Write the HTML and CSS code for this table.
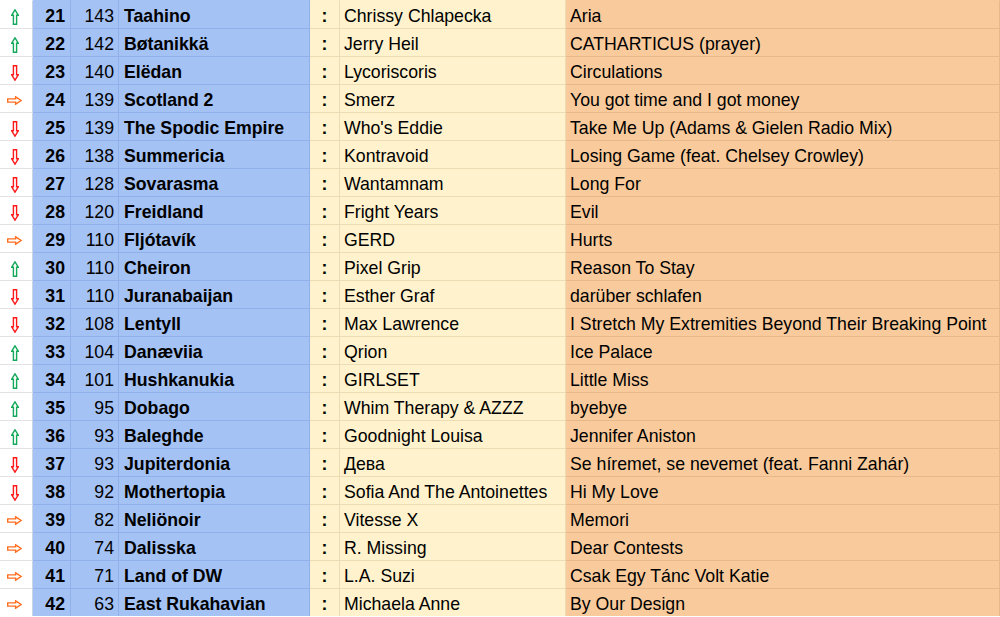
FILE: index.html
```html
<!DOCTYPE html>
<html>
<head>
<meta charset="utf-8">
<link rel="stylesheet" href="styles.css">
</head>
<body>
<div class="sheet">
  <div class="row"><div class="c arr"><svg class="up" width="8" height="16" viewBox="0 0 8 16"><polygon points="4,0.8 7.3,6.2 5.6,6.2 5.6,15.3 2.4,15.3 2.4,6.2 0.7,6.2"/></svg></div><div class="c rk">21</div><div class="c pt">143</div><div class="c nm">Taahino</div><div class="c co">:</div><div class="c ar">Chrissy Chlapecka</div><div class="c sg">Aria</div></div>
  <div class="row"><div class="c arr"><svg class="up" width="8" height="16" viewBox="0 0 8 16"><polygon points="4,0.8 7.3,6.2 5.6,6.2 5.6,15.3 2.4,15.3 2.4,6.2 0.7,6.2"/></svg></div><div class="c rk">22</div><div class="c pt">142</div><div class="c nm">Bøtanikkä</div><div class="c co">:</div><div class="c ar">Jerry Heil</div><div class="c sg">CATHARTICUS (prayer)</div></div>
  <div class="row"><div class="c arr"><svg class="dn" width="8" height="16" viewBox="0 0 8 16"><polygon points="4,15.2 7.3,9.8 5.6,9.8 5.6,0.7 2.4,0.7 2.4,9.8 0.7,9.8"/></svg></div><div class="c rk">23</div><div class="c pt">140</div><div class="c nm">Elëdan</div><div class="c co">:</div><div class="c ar">Lycoriscoris</div><div class="c sg">Circulations</div></div>
  <div class="row"><div class="c arr"><svg class="rt" width="15" height="9" viewBox="0 0 15 9"><polygon points="0.7,2.9 8.6,2.9 8.6,0.8 14.2,4.5 8.6,8.2 8.6,6.1 0.7,6.1"/></svg></div><div class="c rk">24</div><div class="c pt">139</div><div class="c nm">Scotland 2</div><div class="c co">:</div><div class="c ar">Smerz</div><div class="c sg">You got time and I got money</div></div>
  <div class="row"><div class="c arr"><svg class="dn" width="8" height="16" viewBox="0 0 8 16"><polygon points="4,15.2 7.3,9.8 5.6,9.8 5.6,0.7 2.4,0.7 2.4,9.8 0.7,9.8"/></svg></div><div class="c rk">25</div><div class="c pt">139</div><div class="c nm">The Spodic Empire</div><div class="c co">:</div><div class="c ar">Who's Eddie</div><div class="c sg">Take Me Up (Adams &amp; Gielen Radio Mix)</div></div>
  <div class="row"><div class="c arr"><svg class="dn" width="8" height="16" viewBox="0 0 8 16"><polygon points="4,15.2 7.3,9.8 5.6,9.8 5.6,0.7 2.4,0.7 2.4,9.8 0.7,9.8"/></svg></div><div class="c rk">26</div><div class="c pt">138</div><div class="c nm">Summericia</div><div class="c co">:</div><div class="c ar">Kontravoid</div><div class="c sg">Losing Game (feat. Chelsey Crowley)</div></div>
  <div class="row"><div class="c arr"><svg class="dn" width="8" height="16" viewBox="0 0 8 16"><polygon points="4,15.2 7.3,9.8 5.6,9.8 5.6,0.7 2.4,0.7 2.4,9.8 0.7,9.8"/></svg></div><div class="c rk">27</div><div class="c pt">128</div><div class="c nm">Sovarasma</div><div class="c co">:</div><div class="c ar">Wantamnam</div><div class="c sg">Long For</div></div>
  <div class="row"><div class="c arr"><svg class="dn" width="8" height="16" viewBox="0 0 8 16"><polygon points="4,15.2 7.3,9.8 5.6,9.8 5.6,0.7 2.4,0.7 2.4,9.8 0.7,9.8"/></svg></div><div class="c rk">28</div><div class="c pt">120</div><div class="c nm">Freidland</div><div class="c co">:</div><div class="c ar">Fright Years</div><div class="c sg">Evil</div></div>
  <div class="row"><div class="c arr"><svg class="rt" width="15" height="9" viewBox="0 0 15 9"><polygon points="0.7,2.9 8.6,2.9 8.6,0.8 14.2,4.5 8.6,8.2 8.6,6.1 0.7,6.1"/></svg></div><div class="c rk">29</div><div class="c pt">110</div><div class="c nm">Fljótavík</div><div class="c co">:</div><div class="c ar">GERD</div><div class="c sg">Hurts</div></div>
  <div class="row"><div class="c arr"><svg class="up" width="8" height="16" viewBox="0 0 8 16"><polygon points="4,0.8 7.3,6.2 5.6,6.2 5.6,15.3 2.4,15.3 2.4,6.2 0.7,6.2"/></svg></div><div class="c rk">30</div><div class="c pt">110</div><div class="c nm">Cheiron</div><div class="c co">:</div><div class="c ar">Pixel Grip</div><div class="c sg">Reason To Stay</div></div>
  <div class="row"><div class="c arr"><svg class="dn" width="8" height="16" viewBox="0 0 8 16"><polygon points="4,15.2 7.3,9.8 5.6,9.8 5.6,0.7 2.4,0.7 2.4,9.8 0.7,9.8"/></svg></div><div class="c rk">31</div><div class="c pt">110</div><div class="c nm">Juranabaijan</div><div class="c co">:</div><div class="c ar">Esther Graf</div><div class="c sg">darüber schlafen</div></div>
  <div class="row"><div class="c arr"><svg class="dn" width="8" height="16" viewBox="0 0 8 16"><polygon points="4,15.2 7.3,9.8 5.6,9.8 5.6,0.7 2.4,0.7 2.4,9.8 0.7,9.8"/></svg></div><div class="c rk">32</div><div class="c pt">108</div><div class="c nm">Lentyll</div><div class="c co">:</div><div class="c ar">Max Lawrence</div><div class="c sg">I Stretch My Extremities Beyond Their Breaking Point</div></div>
  <div class="row"><div class="c arr"><svg class="up" width="8" height="16" viewBox="0 0 8 16"><polygon points="4,0.8 7.3,6.2 5.6,6.2 5.6,15.3 2.4,15.3 2.4,6.2 0.7,6.2"/></svg></div><div class="c rk">33</div><div class="c pt">104</div><div class="c nm">Danæviia</div><div class="c co">:</div><div class="c ar">Qrion</div><div class="c sg">Ice Palace</div></div>
  <div class="row"><div class="c arr"><svg class="up" width="8" height="16" viewBox="0 0 8 16"><polygon points="4,0.8 7.3,6.2 5.6,6.2 5.6,15.3 2.4,15.3 2.4,6.2 0.7,6.2"/></svg></div><div class="c rk">34</div><div class="c pt">101</div><div class="c nm">Hushkanukia</div><div class="c co">:</div><div class="c ar">GIRLSET</div><div class="c sg">Little Miss</div></div>
  <div class="row"><div class="c arr"><svg class="up" width="8" height="16" viewBox="0 0 8 16"><polygon points="4,0.8 7.3,6.2 5.6,6.2 5.6,15.3 2.4,15.3 2.4,6.2 0.7,6.2"/></svg></div><div class="c rk">35</div><div class="c pt">95</div><div class="c nm">Dobago</div><div class="c co">:</div><div class="c ar">Whim Therapy &amp; AZZZ</div><div class="c sg">byebye</div></div>
  <div class="row"><div class="c arr"><svg class="up" width="8" height="16" viewBox="0 0 8 16"><polygon points="4,0.8 7.3,6.2 5.6,6.2 5.6,15.3 2.4,15.3 2.4,6.2 0.7,6.2"/></svg></div><div class="c rk">36</div><div class="c pt">93</div><div class="c nm">Baleghde</div><div class="c co">:</div><div class="c ar">Goodnight Louisa</div><div class="c sg">Jennifer Aniston</div></div>
  <div class="row"><div class="c arr"><svg class="dn" width="8" height="16" viewBox="0 0 8 16"><polygon points="4,15.2 7.3,9.8 5.6,9.8 5.6,0.7 2.4,0.7 2.4,9.8 0.7,9.8"/></svg></div><div class="c rk">37</div><div class="c pt">93</div><div class="c nm">Jupiterdonia</div><div class="c co">:</div><div class="c ar">Дева</div><div class="c sg">Se híremet, se nevemet (feat. Fanni Zahár)</div></div>
  <div class="row"><div class="c arr"><svg class="dn" width="8" height="16" viewBox="0 0 8 16"><polygon points="4,15.2 7.3,9.8 5.6,9.8 5.6,0.7 2.4,0.7 2.4,9.8 0.7,9.8"/></svg></div><div class="c rk">38</div><div class="c pt">92</div><div class="c nm">Mothertopia</div><div class="c co">:</div><div class="c ar">Sofia And The Antoinettes</div><div class="c sg">Hi My Love</div></div>
  <div class="row"><div class="c arr"><svg class="rt" width="15" height="9" viewBox="0 0 15 9"><polygon points="0.7,2.9 8.6,2.9 8.6,0.8 14.2,4.5 8.6,8.2 8.6,6.1 0.7,6.1"/></svg></div><div class="c rk">39</div><div class="c pt">82</div><div class="c nm">Neliönoir</div><div class="c co">:</div><div class="c ar">Vitesse X</div><div class="c sg">Memori</div></div>
  <div class="row"><div class="c arr"><svg class="rt" width="15" height="9" viewBox="0 0 15 9"><polygon points="0.7,2.9 8.6,2.9 8.6,0.8 14.2,4.5 8.6,8.2 8.6,6.1 0.7,6.1"/></svg></div><div class="c rk">40</div><div class="c pt">74</div><div class="c nm">Dalisska</div><div class="c co">:</div><div class="c ar">R. Missing</div><div class="c sg">Dear Contests</div></div>
  <div class="row"><div class="c arr"><svg class="rt" width="15" height="9" viewBox="0 0 15 9"><polygon points="0.7,2.9 8.6,2.9 8.6,0.8 14.2,4.5 8.6,8.2 8.6,6.1 0.7,6.1"/></svg></div><div class="c rk">41</div><div class="c pt">71</div><div class="c nm">Land of DW</div><div class="c co">:</div><div class="c ar">L.A. Suzi</div><div class="c sg">Csak Egy Tánc Volt Katie</div></div>
  <div class="row"><div class="c arr"><svg class="rt" width="15" height="9" viewBox="0 0 15 9"><polygon points="0.7,2.9 8.6,2.9 8.6,0.8 14.2,4.5 8.6,8.2 8.6,6.1 0.7,6.1"/></svg></div><div class="c rk">42</div><div class="c pt">63</div><div class="c nm">East Rukahavian</div><div class="c co">:</div><div class="c ar">Michaela Anne</div><div class="c sg">By Our Design</div></div>
</div>
</body>
</html>
```

FILE: styles.css
```css
html, body {
  margin: 0;
  padding: 0;
  background: #ffffff;
}
body {
  font-family: "Liberation Sans", Arial, sans-serif;
  font-size: 17.7px;
  color: #000;
  overflow: hidden;
}
.sheet {
  width: 1000px;
}
.row {
  display: grid;
  grid-template-columns: 33px 38px 48px 191px 30px 226px 434px;
}
.c {
  box-sizing: border-box;
  height: 28px;
  border-top: 1px solid;
  border-right: 1px solid;
  padding-top: 4px;
  line-height: 22px;
  white-space: nowrap;
  overflow: hidden;
}
.row:first-child .c {
  border-top-color: transparent;
}
.arr {
  background: #ffffff;
  border-top-color: #e2e2e2;
  border-right-color: #c9d4e6;
  display: flex;
  align-items: center;
  justify-content: center;
  padding-top: 4px;
  padding-right: 3px;
  line-height: 0;
}
.arr svg polygon {
  stroke-width: 1.4;
  stroke-linejoin: miter;
  fill: #ffffff;
}
.up polygon { stroke: #12a95a; fill: #f3fbe8; }
.dn polygon { stroke: #ff1a1a; }
.rt polygon { stroke: #ff6d1f; }
.rk, .pt, .nm {
  background: #a4c2f4;
  border-top-color: #8fb0e8;
  border-right-color: #8fb0e8;
}
.rk {
  font-weight: bold;
  text-align: right;
  padding-right: 5px;
}
.pt {
  text-align: right;
  padding-right: 4px;
}
.nm {
  font-weight: bold;
  padding-left: 5px;
}
.co, .ar {
  background: #fff2cc;
  border-top-color: #ecdcb3;
  border-right-color: #ecdcb3;
}
.co {
  font-weight: bold;
  text-align: center;
}
.ar {
  padding-left: 4px;
}
.sg {
  background: #f9cb9c;
  border-top-color: #e6b98c;
  border-right-color: #e6b98c;
  padding-left: 4px;
}
```
